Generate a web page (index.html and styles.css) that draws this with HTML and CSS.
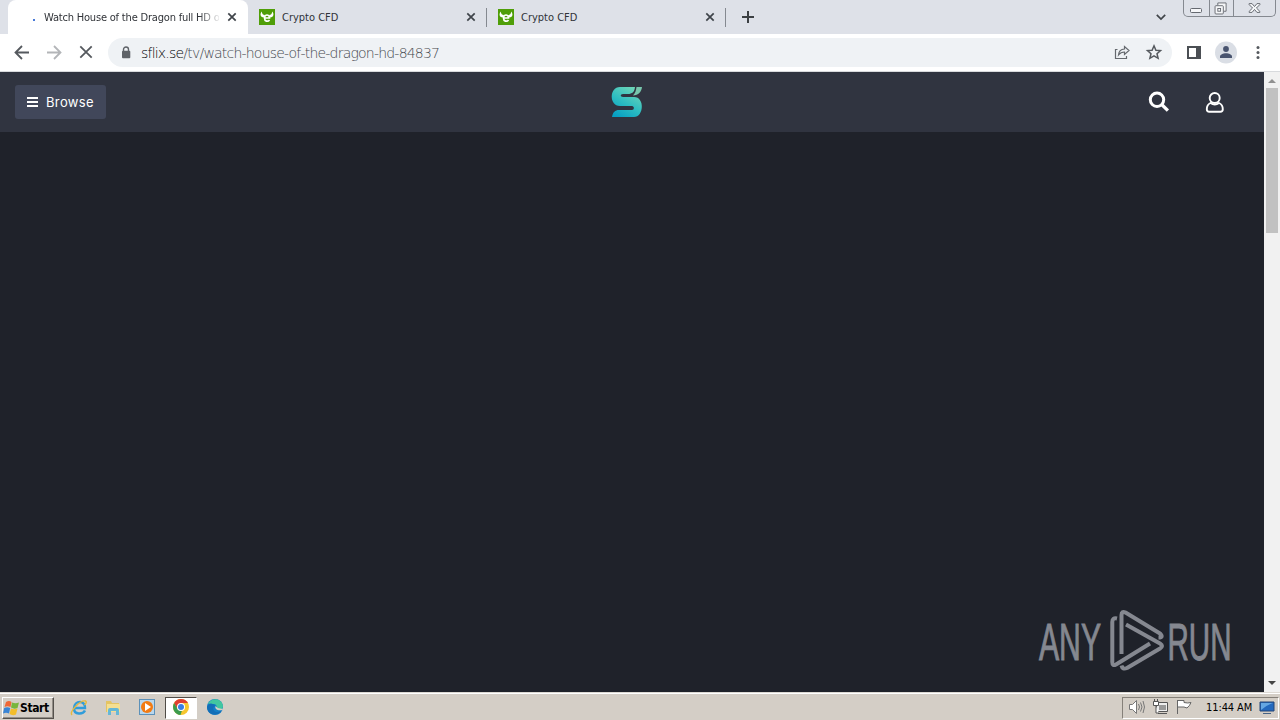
FILE: index.html
```html
<!DOCTYPE html>
<html lang="en">
<head>
<meta charset="utf-8">
<title>Watch House of the Dragon full HD</title>
<link rel="stylesheet" href="styles.css">
</head>
<body>
<div class="desktop">
  <header class="tabstrip">
    <div class="tab tab-active">
      <span class="loading-dot"></span>
      <span class="tab-title title-active">Watch House of the Dragon full HD o</span>
      <svg class="tab-close" viewBox="0 0 10 10"><path d="M1.3 1.3 8.7 8.7M8.7 1.3 1.3 8.7"/></svg>
    </div>
    <div class="tab">
      <svg class="favicon" viewBox="0 0 16 16"><rect width="16" height="16" fill="#4f9e08"/><path d="M2.800 2.500C.5 5 1.500 8.500 5 8.500L6 6C4 6 3 5 2.800 2.500ZM13.200 2.500C15.500 5 14.500 8.500 11 8.500L10 6c2 0 3-1 3.200-3.500Z" fill="#fff"/><path d="M6 9h4.500C10.500 5 5.500 5 5.500 9c0 3.500 3.500 4 5 2" fill="none" stroke="#fff" stroke-width="1.700"/></svg>
      <span class="tab-title">Crypto CFD</span>
      <svg class="tab-close" viewBox="0 0 10 10"><path d="M1.300 1.300 8.700 8.700M8.700 1.300 1.300 8.700"/></svg>
    </div>
    <div class="tab">
      <svg class="favicon" viewBox="0 0 16 16"><rect width="16" height="16" fill="#4f9e08"/><path d="M2.800 2.500C.5 5 1.500 8.500 5 8.500L6 6C4 6 3 5 2.800 2.500ZM13.200 2.500C15.500 5 14.500 8.500 11 8.500L10 6c2 0 3-1 3.200-3.500Z" fill="#fff"/><path d="M6 9h4.500C10.500 5 5.500 5 5.500 9c0 3.500 3.500 4 5 2" fill="none" stroke="#fff" stroke-width="1.700"/></svg>
      <span class="tab-title">Crypto CFD</span>
      <svg class="tab-close" viewBox="0 0 10 10"><path d="M1.300 1.300 8.700 8.700M8.700 1.300 1.300 8.700"/></svg>
    </div>
    <svg class="new-tab" viewBox="0 0 12 12"><path d="M6 0v12M0 6h12"/></svg>
    <svg class="tab-search" viewBox="0 0 10 6"><path d="m.8.8 4.200 4.200L9.200.8"/></svg>
    <div class="window-controls">
      <svg class="wc" viewBox="0 0 25 16"><rect x="6.500" y="8.500" width="11" height="4" rx="1"/></svg>
      <svg class="wc wc-mid" viewBox="0 0 25 16"><path d="M8.500 5V2.500h9v9H15"/><rect x="5.500" y="5.500" width="9" height="9" rx="1"/><rect x="8.500" y="8.500" width="3" height="3"/></svg>
      <svg class="wc wc-close" viewBox="0 0 42 16"><path d="M15.500 3.500h3l2.500 3 2.500-3h3v1l-3.500 3.500 3.500 3.500v1h-3l-2.500-3-2.500 3h-3v-1L19 8l-3.500-3.500Z"/></svg>
    </div>
  </header>

  <div class="toolbar">
    <svg class="nav-icon" viewBox="0 0 16 16"><path d="M15 7.500H2M8 1 1.500 7.500 8 14"/></svg>
    <svg class="nav-icon nav-disabled" viewBox="0 0 16 16"><path d="M1 7.500h13M8 1l6.500 6.500L8 14"/></svg>
    <svg class="nav-icon" viewBox="0 0 16 16"><path d="m2.300 1.300 11.400 11.400M13.700 1.300 2.300 12.700"/></svg>
    <div class="omnibox">
      <svg class="lock" viewBox="0 0 10 13"><path d="M2.500 6V3.500a2.500 2.500 0 0 1 5 0V6" fill="none" stroke="#5f6368" stroke-width="1.400"/><rect x="1" y="4.800" width="8.300" height="7.500" rx="1" fill="#5f6368"/></svg>
      <span class="url"><span class="host">sflix.se</span>/tv/watch-house-of-the-dragon-hd-84837</span>
      <svg class="share" viewBox="0 0 16 16"><path d="M3.500 4.500H1.500v9h11v-2.500M10.500 1.500V4C6.500 4.300 4.800 6.500 4.500 10c1.500-2 3-3 6-3v2.500l4.500-4Z"/></svg>
      <svg class="star" viewBox="0 0 16 16"><path d="m8 .8 1.900 4.400 4.600.4L11 8.700l1.100 4.600L8 10.900l-4.100 2.400L5 8.700 1.500 5.600l4.600-.4Z"/></svg>
    </div>
    <svg class="side-panel" viewBox="0 0 14 14"><path d="M1 1h12v11H1Z" fill="none" stroke="#4b4f54" stroke-width="2"/><path d="M9 1h4v11H9Z" fill="#4b4f54"/></svg>
    <svg class="avatar" viewBox="0 0 22 22"><circle cx="11" cy="10.500" r="11" fill="#dadee5"/><circle cx="11" cy="7" r="2.900" fill="#49546f"/><path d="M5 16v-1.500c0-2 3-3.300 6-3.300s6 1.300 6 3.300V16Z" fill="#49546f"/></svg>
    <svg class="kebab" viewBox="0 0 4 14"><circle cx="2" cy="1.500" r="1.500"/><circle cx="2" cy="6.500" r="1.500"/><circle cx="2" cy="11.500" r="1.500"/></svg>
  </div>

  <div class="viewport">
    <main class="page">
      <nav class="site-header">
        <button class="browse"><svg class="bars" viewBox="0 0 11 10"><path d="M0 1h11M0 5h11M0 9h11"/></svg><span>Browse</span></button>
        <svg class="logo" viewBox="0 0 32 32"><defs><linearGradient id="teal" x1=".8" y1="0" x2=".2" y2="1"><stop stop-color="#74d8b7"/><stop offset=".55" stop-color="#2dbdc1"/><stop offset="1" stop-color="#079fc3"/></linearGradient></defs><path d="M9 1h15c-.5 5-3 7-7 7h-5c-3 0-3 3 0 3h11c11 0 10 20 0 20H1c1-5 3-7 7-7h13c2.500 0 2.500-4 0-4H9C-2 20-2 1 9 1Z" fill="url(#teal)"/><path d="M25.500 1h5.500c-.5 5-3.500 8-9 8.500C24.500 7 25 4 25.500 1Z" fill="#77c6ac"/></svg>
        <div class="site-tools">
          <svg class="search" viewBox="0 0 22 22"><circle cx="9" cy="8.700" r="6.700" fill="none" stroke="#fff" stroke-width="3"/><path d="m13.700 13.500 6.200 6.200" stroke="#fff" stroke-width="3.200"/></svg>
          <svg class="user" viewBox="0 0 18 22"><circle cx="8.700" cy="7" r="5"/><path d="M4.500 12C2.200 13 .8 15 .8 18.300c0 2 .8 2.500 2.500 2.500h11c1.700 0 2.500-.5 2.500-2.500 0-3.300-1.500-5.300-3.800-6.300-2.500 1.800-5.900 1.800-8.500 0Z"/></svg>
        </div>
      </nav>
      <svg class="watermark" viewBox="0 0 204 64">
        <g class="mark-text"><text x="1" y="51.500" textLength="62" lengthAdjust="spacingAndGlyphs">ANY</text><text x="129.500" y="51.500" textLength="64" lengthAdjust="spacingAndGlyphs">RUN</text></g>
        <path d="M79 10.500Q74.300 9.500 74.300 14V54Q74.300 58.500 78 56.500L112 35.500M83.500 46V7Q83.500 2.500 87.500 4.500L122 25.500Q126 29.500 120.500 29.500M88 16.500 122 35.500Q126 38 122 40.500L89 60Q84.500 62 83.500 57.500" class="mark-outline"/>
      </svg>
    </main>
    <aside class="scrollbar"><i class="arrow arrow-up"></i><i class="thumb"></i><i class="arrow arrow-down"></i></aside>
  </div>

  <footer class="taskbar">
    <div class="start"><svg class="win-flag" viewBox="0 0 17 16"><path d="M3 2q3-2 5.500 0L7.500 7Q4.500 5.500 1.500 7Z" fill="#ef6737"/><path d="M9 2.500q3.500 1.500 7 0L14.500 8q-3.500 1.500-6.500-.5Z" fill="#78b63d"/><path d="M1.200 8q3-1.500 6 0L6 13.500q-3-1.500-6 0Z" fill="#3984d5"/><path d="M8 8.500q3 1.500 6.500 0L13 14.500q-3.500 1.500-6.500-.5Z" fill="#f3bd29"/></svg><span>Start</span></div>
    <div class="quick-launch">
      <svg class="app" viewBox="0 0 18 18"><path d="M4.500 9h10.500C16 1 4 1 4 9.500c0 6.500 9 6 11 2" fill="none" stroke="#319dda" stroke-width="2.500"/><path d="M2 16C-1 13 10 1 15.500 2q2 1-1 4" fill="none" stroke="#e7b93c" stroke-width="1.400"/></svg>
      <svg class="app" viewBox="0 0 18 18"><path d="M2 2h5l1 2h7v9H2Z" fill="#e4c463"/><path d="M3 5h13v8H3Z" fill="#f5df91"/><path d="M4 16v-5q0-2 2-2h7q2 0 2 2v5h-3v-4H7v4Z" fill="#65b7d6"/></svg>
      <svg class="app" viewBox="0 0 18 18"><rect x="1.500" y=".5" width="15" height="15" fill="#b9d7ed" stroke="#5c91b9"/><circle cx="9" cy="8" r="6" fill="#f27b13"/><path d="m7 4 6 4-6 4Z" fill="#fff"/></svg>
      <div class="app-active"><svg class="app" viewBox="0 0 18 18"><circle cx="9" cy="8" r="8" fill="#f6c62e"/><path d="M2.100 4A8 8 0 0 1 16 4H9L5.500 10Z" fill="#df3f32"/><path d="M2.100 4 6 10.500l4 1L8.500 16A8 8 0 0 1 2.100 4Z" fill="#3b9b4e"/><circle cx="9" cy="8" r="4" fill="#fff"/><circle cx="9" cy="8" r="3" fill="#397ee5"/></svg></div>
      <svg class="app" viewBox="0 0 18 18"><circle cx="9" cy="8" r="8" fill="#147fc7"/><path d="M2 5C5-2 16-1 17 7c0 4-5 5-7 3 2-3 0-5-3-5Q4 4 2 5Z" fill="#42c7a0"/><path d="M1 8c1-4 7-4 8-1-3 1-2 6 2 6 2 0 4-1 5-2-3 7-15 6-15-3Z" fill="#126eb7"/><path d="M9.500 7c-1 3 2 5 7 4l1-1.500Q12 10.500 9.500 7Z" fill="#d4cec6"/></svg>
    </div>
    <div class="tray">
      <svg class="tray-icon" viewBox="0 0 18 18"><path d="M1.500 5.500h3l4-4v13l-4-4h-3Z" fill="#fff" stroke="#777"/><path d="M10.500 5q2 3 0 6M12.500 3.500q3 4.500 0 9M15 2q3 6 0 12" fill="none" stroke="#777"/></svg>
      <svg class="tray-icon" viewBox="0 0 18 18"><path d="M4.500 3.500h11v9h-11ZM6 14.500h9" fill="#eee" stroke="#555"/><path d="M7 6h7v5H7Z" fill="#999"/><path d="M1.500 2.500h5v4h-5ZM2.500 0v2M5.500 0v2M4 7v7h3" fill="#fff" stroke="#555"/></svg>
      <svg class="tray-icon flag" viewBox="0 0 18 18"><path d="M1.500 1v14M2 1.500h6v2q4 1 7 0-1 3-4 5.500L8 8H2" fill="#fff" stroke="#666"/></svg>
      <span class="clock">11:44 AM</span>
      <svg class="monitor" viewBox="0 0 16 14"><path d="M1 1h14v9H1Z" fill="#2469be" stroke="#244677"/><path d="M2 2h12Q8 4 2 9Z" fill="#65a7e3"/><path d="M4 12.500h8" stroke="#466385"/></svg>
    </div>
  </footer>
</div>
</body>
</html>
```
FILE: styles.css
```css
* { box-sizing: border-box; }
body { margin: 0; font-family: "DejaVu Sans Condensed", "Noto Sans", sans-serif; }
svg { display: block; flex: none; overflow: visible; }
.desktop { width: 1280px; height: 720px; display: flex; flex-direction: column; overflow: hidden; }
.tabstrip { height: 34px; background: #dee1e8; display: flex; padding-left: 8px; flex: none; }
.tab { width: 239px; height: 34px; display: flex; align-items: center; padding: 0 11px; position: relative; }
.tab:not(.tab-active)::after { content: ""; position: absolute; right: 0; top: 8px; width: 1px; height: 19px; background: #858990; }
.tab-active { width: 240px; background: #fff; border-radius: 8px 8px 0 0; }
.loading-dot { width: 2px; height: 2px; margin: 6px 9px 0 14px; background: #4779d8; flex: none; }
.favicon { width: 16px; height: 16px; margin-right: 7px; }
.tab-title { flex: 1; white-space: nowrap; overflow: hidden; font-size: 11px; letter-spacing: 0; color: #303338; }
.title-active { mask-image: linear-gradient(to right, #000 155px, transparent 177px); letter-spacing: -.19px; }
.tab-close { width: 10px; height: 10px; margin-left: 8px; stroke: #3f444a; stroke-width: 1.7; fill: none; }
.new-tab { width: 12px; height: 12px; margin: 11px 0 0 16px; stroke: #3c4043; stroke-width: 2; }
.tab-search { width: 10px; height: 6px; margin: 14px 17px 0 auto; fill: none; stroke: #41454a; stroke-width: 1.7; }
.window-controls { display: flex; height: 17px; width: 93px; margin-right: 4px; border: 1px solid #858990; border-top: 0; border-radius: 0 0 5px 5px; }
.wc { width: 25px; height: 16px; fill: #f5f6f8; stroke: #656970; }
.wc-mid { border-left: 1px solid #858990; border-right: 1px solid #858990; }
.wc-close { width: 41px; }
.toolbar { height: 38px; background: #fff; border-bottom: 1px solid #d8dadd; display: flex; align-items: center; padding-left: 14px; flex: none; }
.nav-icon { width: 16px; height: 16px; margin-right: 16px; stroke: #55595e; stroke-width: 1.8; fill: none; }
.nav-disabled { stroke: #b3b5b8; }
.omnibox { width: 1064px; height: 29px; margin-left: -2px; border-radius: 15px; background: #eff2f5; display: flex; align-items: center; padding: 0 10px 0 13px; }
.lock { width: 10px; height: 13px; margin-right: 10px; }
.url { font-family: "DejaVu Sans", sans-serif; font-weight: 200; font-size: 14px; letter-spacing: -.79px; color: #45494e; white-space: nowrap; }
.host { color: #000; }
.share { width: 16px; height: 16px; margin: 0 16px 0 auto; fill: none; stroke: #65696e; stroke-width: 1.2; }
.star { width: 16px; height: 16px; fill: none; stroke: #55595e; stroke-width: 1.5; }
.side-panel { width: 14px; height: 14px; margin-left: 15px; }
.avatar { width: 22px; height: 22px; margin-left: 14px; }
.kebab { width: 4px; height: 14px; margin-left: 19px; fill: #55595e; }
.viewport { height: 620px; display: flex; flex: none; }
.page { width: 1264px; background: #1f222a; display: flex; flex-direction: column; justify-content: space-between; }
.site-header { height: 60px; background: #303440; display: grid; grid-template-columns: 596px 32px 1fr; align-items: center; padding: 0 41px 0 15px; }
.browse { width: 91px; height: 34px; border: 0; border-radius: 3px; background: #41475a; color: #fff; display: flex; align-items: center; padding: 0 12px 1px; gap: 8px; font: 13px Inter, sans-serif; letter-spacing: .35px; }
.browse span { white-space: nowrap; }
.bars { width: 11px; height: 10px; stroke: #fff; stroke-width: 2; }
.logo { width: 32px; height: 32px; }
.site-tools { display: flex; align-items: center; justify-content: flex-end; gap: 36px; }
.search { width: 22px; height: 22px; }
.user { width: 18px; height: 22px; margin-right: -1px; fill: none; stroke: #fff; stroke-width: 1.9; }
.watermark { width: 204px; height: 64px; margin: 0 22px 20px auto; }
.mark-text { font-family: "Liberation Sans", sans-serif; font-size: 52px; fill: #858890; stroke: #858890; stroke-width: 1; }
.mark-outline { fill: none; stroke: #858890; stroke-width: 4; stroke-linejoin: round; stroke-linecap: butt; }
.scrollbar { width: 16px; background: #f1f1f1; display: flex; flex-direction: column; align-items: center; padding: 7px 0; }
.arrow { width: 0; height: 0; border: 4px solid transparent; }
.arrow-up { border-top: 0; border-bottom-color: #919191; }
.thumb { width: 12px; height: 145px; margin-top: 5px; background: #c1c1c1; }
.arrow-down { border-bottom: 0; border-top-color: #454545; margin-top: auto; }
.taskbar { height: 28px; background: #d4cec6; border-top: 1px solid #ddd9d3; box-shadow: inset 0 1px #fff; display: flex; align-items: center; padding: 2px 1px 0 2px; flex: none; }
.start { width: 52px; height: 22px; border: 1px solid; border-color: #fff #55514c #55514c #fff; box-shadow: inset -1px -1px #938e87; display: flex; align-items: center; font: bold 12px "DejaVu Sans Condensed", sans-serif; letter-spacing: -.4px; }
.win-flag { width: 17px; height: 16px; }
.quick-launch { display: flex; align-items: center; margin-left: 16px; }
.app { width: 18px; height: 18px; margin-right: 16px; }
.app-active { width: 32px; height: 22px; margin: 0 9px 0 -7px; background: #fff; border: 1px solid; border-color: #504c47 #fff #fff #504c47; display: flex; justify-content: center; align-items: center; }
.app-active .app { margin: 0; }
.tray { width: 157px; height: 22px; margin-left: auto; border: 1px solid; border-color: #858079 #fff #fff #858079; display: flex; align-items: center; padding-left: 5px; }
.tray-icon { width: 18px; height: 18px; margin-right: 6px; }
.tray-icon.flag { margin-right: 12px; }
.clock { width: 48px; font-size: 11px; letter-spacing: -.1px; white-space: nowrap; }
.monitor { width: 16px; height: 14px; margin-left: 5px; }
```
